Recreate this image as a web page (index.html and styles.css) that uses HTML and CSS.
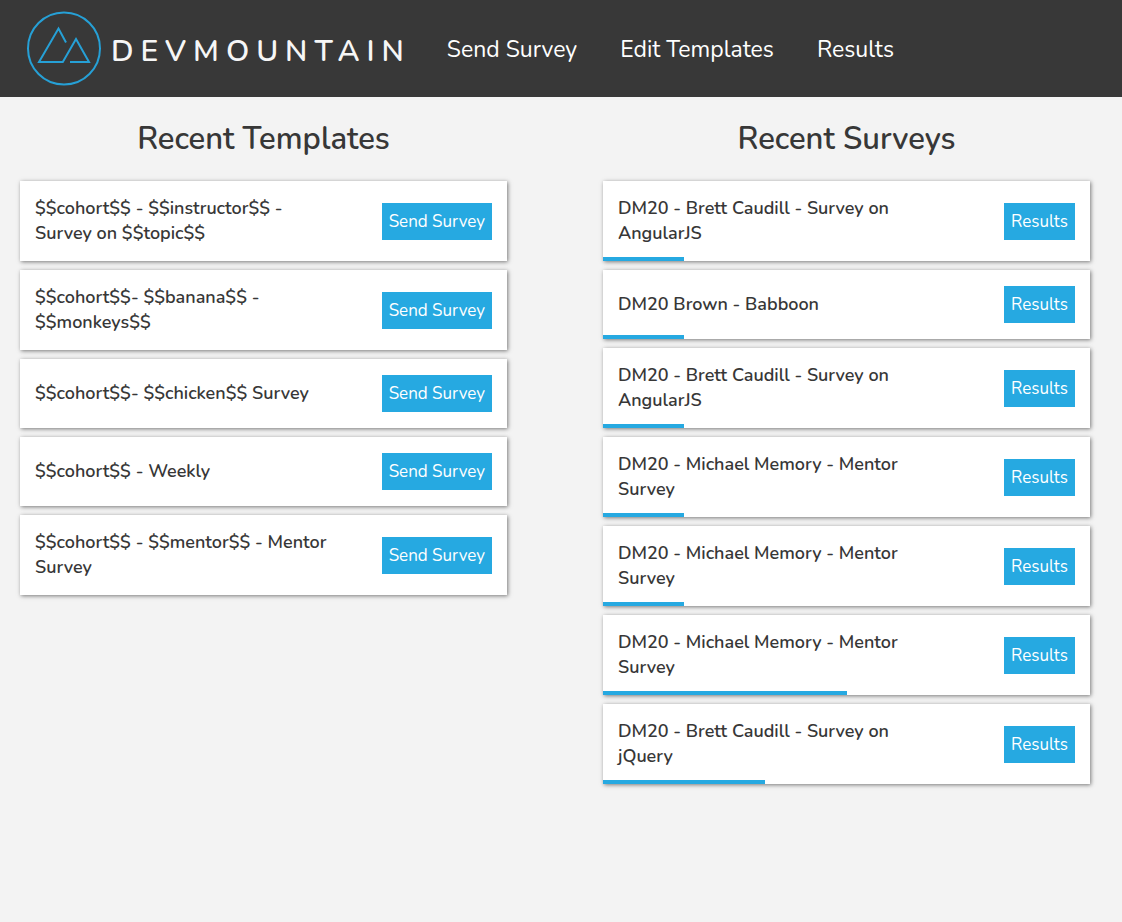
FILE: index.html
```html
<!DOCTYPE html>
<html lang="en">
<head>
<meta charset="utf-8">
<title>DevMountain Surveys</title>
<link rel="stylesheet" href="styles.css">
</head>
<body>
<header class="site-header">
  <a class="brand" href="#">
    <svg class="brand-mark" viewBox="0 0 76 76" aria-hidden="true">
      <circle cx="38" cy="37.500" r="36"/>
      <path d="M40 31.500 L32.500 17.500 L13 51 H36.800 L50 28 L63 51 H44"/>
    </svg>
    <span class="brand-name">DEVMOUNTAIN</span>
  </a>
  <nav class="site-nav">
    <a href="#">Send Survey</a>
    <a href="#">Edit Templates</a>
    <a href="#">Results</a>
  </nav>
</header>
<main class="dashboard">
  <section class="column">
    <h1 class="column-title">Recent Templates</h1>
    <article class="card"><h2 class="card-title">$$cohort$$ - $$instructor$$ - Survey on $$topic$$</h2><button class="action">Send Survey</button></article>
    <article class="card"><h2 class="card-title">$$cohort$$- $$banana$$ - $$monkeys$$</h2><button class="action">Send Survey</button></article>
    <article class="card"><h2 class="card-title">$$cohort$$- $$chicken$$ Survey</h2><button class="action">Send Survey</button></article>
    <article class="card"><h2 class="card-title">$$cohort$$ - Weekly</h2><button class="action">Send Survey</button></article>
    <article class="card"><h2 class="card-title">$$cohort$$ - $$mentor$$ - Mentor Survey</h2><button class="action">Send Survey</button></article>
  </section>
  <section class="column">
    <h1 class="column-title">Recent Surveys</h1>
    <article class="card"><h2 class="card-title">DM20 - Brett Caudill - Survey on AngularJS</h2><button class="action">Results</button><span class="progress" style="width:16.6%"></span></article>
    <article class="card"><h2 class="card-title">DM20 Brown - Babboon</h2><button class="action">Results</button><span class="progress" style="width:16.6%"></span></article>
    <article class="card"><h2 class="card-title">DM20 - Brett Caudill - Survey on AngularJS</h2><button class="action">Results</button><span class="progress" style="width:16.6%"></span></article>
    <article class="card"><h2 class="card-title">DM20 - Michael Memory - Mentor Survey</h2><button class="action">Results</button><span class="progress" style="width:16.6%"></span></article>
    <article class="card"><h2 class="card-title">DM20 - Michael Memory - Mentor Survey</h2><button class="action">Results</button><span class="progress" style="width:16.6%"></span></article>
    <article class="card"><h2 class="card-title">DM20 - Michael Memory - Mentor Survey</h2><button class="action">Results</button><span class="progress" style="width:50%"></span></article>
    <article class="card"><h2 class="card-title">DM20 - Brett Caudill - Survey on jQuery</h2><button class="action">Results</button><span class="progress" style="width:33.3%"></span></article>
  </section>
</main>
</body>
</html>
```
FILE: styles.css
```css
* { box-sizing: border-box; }
body {
  margin: 0;
  min-height: 100vh;
  background: #f3f3f3;
  color: #373737;
  font-family: "Nunito", "Open Sans", sans-serif;
}
.site-header {
  display: flex;
  align-items: center;
  gap: 36px;
  padding: 11px 26px 10px;
  background: #383838;
}
.brand {
  display: flex;
  align-items: center;
  gap: 9px;
  color: #f6f6f6;
  text-decoration: none;
}
.brand-mark {
  width: 76px;
  height: 76px;
  fill: none;
  stroke: #26a0d6;
  stroke-width: 2;
}
.brand-name {
  padding-top: 5px;
  font-size: 30px;
  font-weight: 600;
  line-height: 40px;
  letter-spacing: 7px;
}
.site-nav {
  display: flex;
  gap: 43px;
  padding-top: 2px;
}
.site-nav a {
  color: #fff;
  font-size: 23px;
  line-height: 32px;
  text-decoration: none;
}
.dashboard {
  display: grid;
  grid-template-columns: 1fr 1fr;
  align-items: start;
  gap: 96px;
  padding: 22px 32px 20px 20px;
}
.column {
  display: flex;
  flex-direction: column;
  gap: 9px;
}
.column-title {
  margin: 0 0 13px;
  font-size: 31px;
  font-weight: 600;
  line-height: 40px;
  text-align: center;
}
.card {
  position: relative;
  display: flex;
  align-items: center;
  justify-content: space-between;
  min-height: 69px;
  padding: 15px;
  background: #fff;
  box-shadow: 1px 1px 4px rgba(0, 0, 0, 0.5);
}
.card-title {
  width: 66%;
  margin: 0;
  font-size: 18px;
  font-weight: 600;
  line-height: 25px;
}
.action {
  padding: 6px 7px;
  border: 0;
  background: #26a9e1;
  color: #fff;
  font-family: inherit;
  font-size: 17px;
  line-height: 25px;
}
.progress {
  position: absolute;
  bottom: 0;
  left: 0;
  height: 4px;
  background: #26a9e1;
}
```
